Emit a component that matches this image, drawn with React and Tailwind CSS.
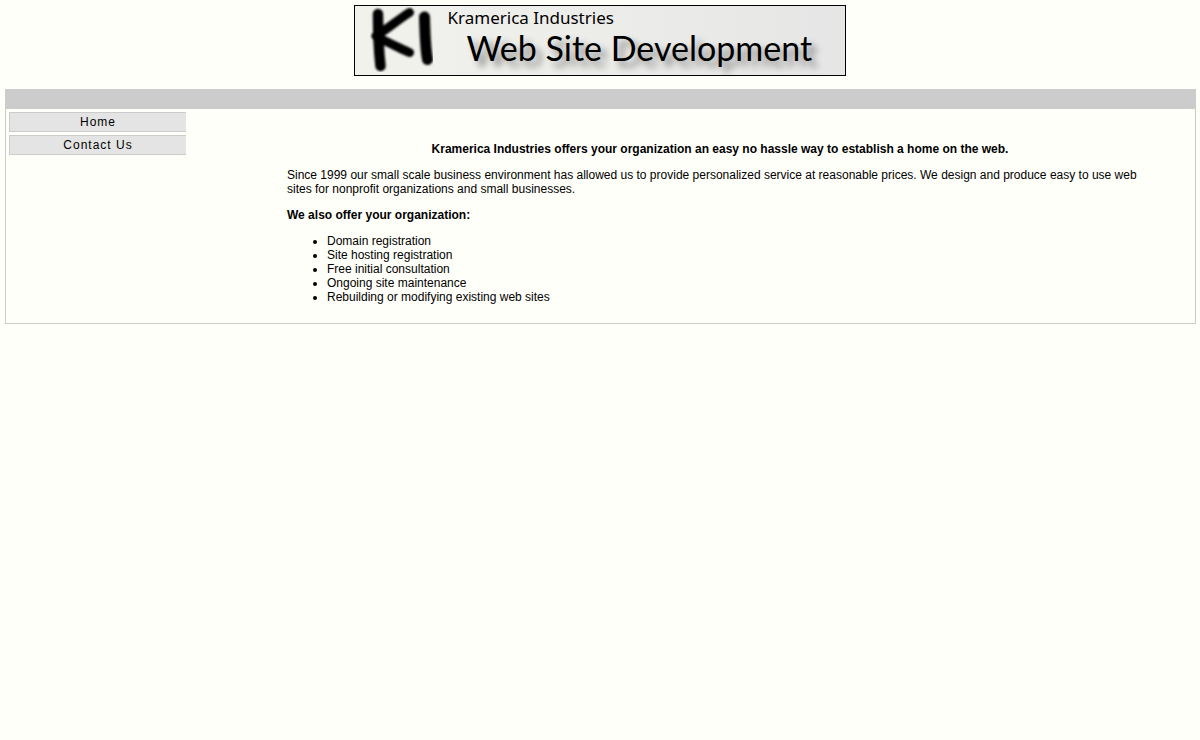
const links = [
  { label: "Home", href: "#home" },
  { label: "Contact Us", href: "#contact" },
];

const services = [
  "Domain registration",
  "Site hosting registration",
  "Free initial consultation",
  "Ongoing site maintenance",
  "Rebuilding or modifying existing web sites",
];

const Monogram = () => (
  <svg
    width="88"
    height="69"
    viewBox="0 0 88 69"
    fill="none"
    stroke="#000"
    strokeLinecap="round"
    strokeLinejoin="round"
    className="shrink-0"
    aria-hidden="true"
  >
    <defs>
      <filter id="soft" x="-10%" y="-10%" width="120%" height="120%">
        <feGaussianBlur stdDeviation="0.8" />
      </filter>
    </defs>
    <g filter="url(#soft)">
      <path d="M23 8 C23 22 23.500 42 25.500 60" strokeWidth="10.500" />
      <path d="M54.500 6.500 C44 13 34 22 21 30" strokeWidth="9" />
      <path d="M21 30 C31 36 43 41 54.500 46.500" strokeWidth="9" />
      <path d="M69.500 11 C70 25 70 40 72.500 53.500" strokeWidth="11" />
    </g>
  </svg>
);

const Banner = () => (
  <header className="flex justify-center pr-0.5">
    <h1 className="flex w-[492px] h-[71px] border border-black bg-linear-to-r from-[#f2f2ed] to-[#e6e6e6] font-normal text-black overflow-hidden">
      <Monogram />
      <span className="flex flex-col whitespace-nowrap">
        <span className="pl-[5px] font-['Noto_Sans',sans-serif] text-[17px] leading-6">
          Kramerica Industries
        </span>
        <span className="pl-6 font-['Lato',sans-serif] text-[34px] leading-9 [text-shadow:6px_6px_7px_rgba(0,0,0,0.45)]">
          Web Site Development
        </span>
      </span>
    </h1>
  </header>
);

const SideNav = () => (
  <nav className="flex flex-col gap-[3px] w-[180px] shrink-0 pt-[3px] pl-[3px]">
    {links.map((link) => (
      <a
        key={link.label}
        href={link.href}
        className="border border-r-0 border-[#cccccc] bg-[#e4e4e4] text-center leading-[18px] tracking-[1px]"
      >
        {link.label}
      </a>
    ))}
  </nav>
);

const App = () => {
  return (
    <div className="min-h-screen bg-[#fffffa] p-[5px] pr-1 font-['Liberation_Sans',Arial,sans-serif] text-xs leading-[14px] text-black">
      <Banner />
      <div className="mt-[13px] border border-[#cccccc]">
        <div className="h-[19px] bg-[#cccccc]" />
        <div className="flex">
          <SideNav />
          <main className="flex flex-col gap-3 grow pt-[33px] pr-[42px] pb-[19px] pl-[101px]">
            <h2 className="text-center font-bold">
              Kramerica Industries offers your organization an easy no hassle
              way to establish a home on the web.
            </h2>
            <p>
              Since 1999 our small scale business environment has allowed us to
              provide personalized service at reasonable prices. We design and
              produce easy to use web sites for nonprofit organizations and
              small businesses.
            </p>
            <h3 className="font-bold">We also offer your organization:</h3>
            <ul className="list-disc pl-10">
              {services.map((service) => (
                <li key={service}>{service}</li>
              ))}
            </ul>
          </main>
        </div>
      </div>
    </div>
  );
};

export default App;
